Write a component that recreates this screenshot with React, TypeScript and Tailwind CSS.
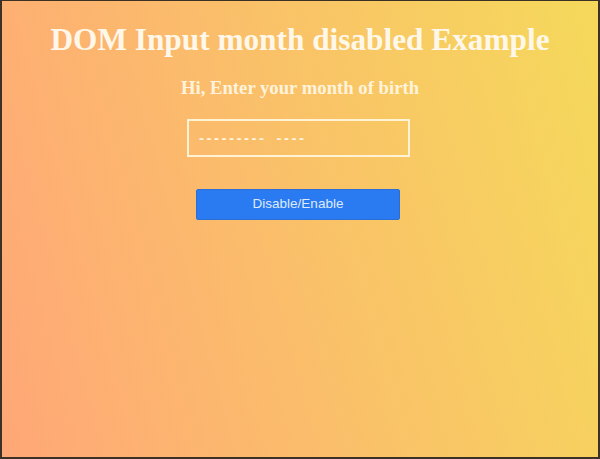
import React from 'react';

export default function App() {
  return (
    <div className="w-[600px] h-[459px] border-t border-x-2 border-b-2 border-[#3b3124] bg-[linear-gradient(75deg,#ffa777,#f5d95b)] flex flex-col items-center font-['Liberation_Sans',Arial,sans-serif]">
      {/* Heading */}
      <h1 className="mt-[21px] text-[31.3px] leading-[36px] font-bold font-['Liberation_Serif',serif] text-[#fff8ea]">
        DOM Input month disabled Example
      </h1>
      <h3 className="mt-[19px] text-[18.7px] leading-[22px] font-bold font-['Liberation_Serif',serif] text-[#fff3dc]">
        Hi, Enter your month of birth
      </h3>

      {/* Month field (disabled look) */}
      <div className="mt-[20px] mr-[3px] w-[223px] h-[38px] border-2 border-[#fff3d6] flex items-center gap-[10px] pl-[10px] font-bold text-[15px] tracking-[2.5px] text-[#fff4dc]">
        <span>---------</span>
        <span>----</span>
      </div>

      {/* Toggle button */}
      <button
        type="button"
        className="mt-[32px] mr-[4px] w-[204px] h-[31px] rounded-[2px] bg-[#2a7bf1] border border-[#2b6fd6] text-[13.5px] text-[#dfeafc]"
      >
        Disable/Enable
      </button>
    </div>
  );
}
